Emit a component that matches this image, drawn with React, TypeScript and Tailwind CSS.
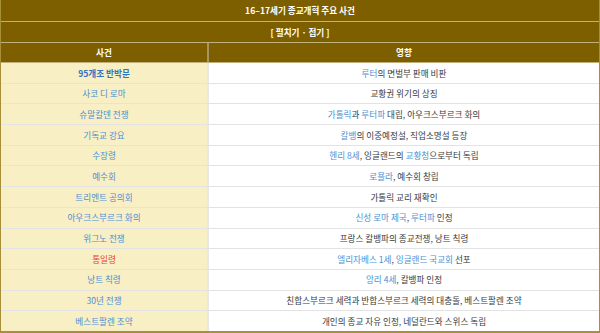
import type { ReactNode } from "react";

type Part = string | { link: string };

const rows: { event: string; red?: boolean; bold?: boolean; effect: Part[] }[] = [
  { event: "95개조 반박문", bold: true, effect: [{ link: "루터" }, "의 면벌부 판매 비판"] },
  { event: "사코 디 로마", effect: ["교황권 위기의 상징"] },
  {
    event: "슈말칼덴 전쟁",
    effect: [{ link: "가톨릭" }, "과 ", { link: "루터파" }, " 대립, 아우크스부르크 화의"],
  },
  { event: "기독교 강요", effect: [{ link: "칼뱅" }, "의 이중예정설, 직업소명설 등장"] },
  {
    event: "수장령",
    effect: [{ link: "헨리 8세" }, ", 잉글랜드의 ", { link: "교황청" }, "으로부터 독립"],
  },
  { event: "예수회", effect: [{ link: "로욜라" }, ", 예수회 창립"] },
  { event: "트리엔트 공의회", effect: ["가톨릭 교리 재확인"] },
  {
    event: "아우크스부르크 화의",
    effect: [{ link: "신성 로마 제국" }, ", ", { link: "루터파" }, " 인정"],
  },
  { event: "위그노 전쟁", effect: ["프랑스 칼뱅파의 종교전쟁, 낭트 칙령"] },
  {
    event: "통일령",
    red: true,
    effect: [{ link: "엘리자베스 1세" }, ", ", { link: "잉글랜드 국교회" }, " 선포"],
  },
  { event: "낭트 칙령", effect: [{ link: "앙리 4세" }, ", 칼뱅파 인정"] },
  { event: "30년 전쟁", effect: ["친합스부르크 세력과 반합스부르크 세력의 대충돌, 베스트팔렌 조약"] },
  { event: "베스트팔렌 조약", effect: ["개인의 종교 자유 인정, 네덜란드와 스위스 독립"] },
];

function HeadRow({ children, className = "" }: { children: ReactNode; className?: string }) {
  return (
    <div
      className={`flex items-center justify-center border-b border-[#c2b07a] bg-[#7d5f00] font-bold text-white ${className}`}
    >
      {children}
    </div>
  );
}

export default function App() {
  return (
    <div
      className="h-[333px] w-[600px] overflow-hidden bg-white text-[8.6px] leading-none text-[#373a3c]"
      style={{ fontFamily: '"Noto Sans CJK KR", "Noto Sans", sans-serif' }}
    >
      <div className="flex h-[333px] flex-col border-x border-b-2 border-[#a8903a]">
        <HeadRow className="h-[22px]">16–17세기 종교개혁 주요 사건</HeadRow>
        <HeadRow className="h-[21px]">[ 펼치기 · 접기 ]</HeadRow>
        <div className="flex h-[20px] border-b border-[#c2b07a] bg-[#7d5f00] font-bold text-white">
          <div className="flex w-[208px] items-center justify-center border-r-2 border-[#a89460]">사건</div>
          <div className="flex flex-1 items-center justify-center">영향</div>
        </div>
        {rows.map((r, i) => (
          <div
            key={r.event}
            className={`flex flex-1 ${i < rows.length - 1 ? "border-b border-[#e3e3e3]" : ""}`}
          >
            <div
              className={`flex w-[208px] items-center justify-center border-r-2 border-[#e8e8e8] bg-[#f9efc5] ${
                r.red ? "text-[#e8412c]" : r.bold ? "font-semibold text-[#2f73c4]" : "text-[#4a90d4]"
              }`}
            >
              {r.event}
            </div>
            <div className="flex flex-1 items-center justify-center whitespace-pre">
              {r.effect.map((p, j) =>
                typeof p === "string" ? (
                  <span key={j}>{p}</span>
                ) : (
                  <span key={j} className="text-[#4a90d4]">
                    {p.link}
                  </span>
                ),
              )}
            </div>
          </div>
        ))}
      </div>
    </div>
  );
}
